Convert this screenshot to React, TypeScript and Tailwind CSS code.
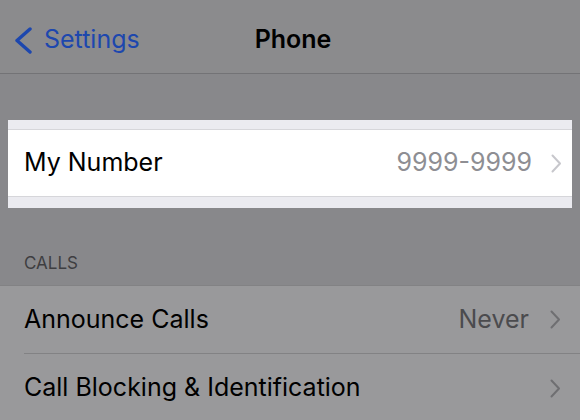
import { FC } from "react";

const Chevron: FC<{ color: string }> = ({ color }) => (
  <svg width="11" height="19" viewBox="0 0 11 19" fill="none">
    <path d="M1.5 1.5L9 9.5L1.5 17.5" stroke={color} strokeWidth="2" strokeLinecap="round" strokeLinejoin="round" />
  </svg>
);

const Row: FC<{ label: string; value?: string; last?: boolean }> = ({ label, value, last }) => (
  <div className="flex h-[68px] items-center pl-6">
    <div className={`flex h-full flex-1 items-center pr-[19px] ${last ? "" : "border-b border-[#828284]"}`}>
      <span className="flex-1 text-[25px] text-black">{label}</span>
      {value && <span className="mr-[21px] text-[25px] text-[#4b4b4e]">{value}</span>}
      <Chevron color="#6f6f72" />
    </div>
  </div>
);

export default function App() {
  return (
    <div
      className="h-[420px] w-[580px] overflow-hidden bg-[#88888b]"
      style={{ fontFamily: "Inter, 'Liberation Sans', sans-serif" }}
    >
      <div className="grid h-[74px] grid-cols-[1fr_auto_1fr] items-center border-b border-[#737376] bg-[#8b8b8d] pt-[7px]">
        <div className="flex items-center gap-[11px] pl-[13px] text-[#1d47ae]">
          <svg width="20" height="27" viewBox="0 0 20 27" fill="none">
            <path d="M17 2L4 13.5L17 25" stroke="#1d47ae" strokeWidth="3.4" strokeLinecap="round" strokeLinejoin="round" />
          </svg>
          <span className="text-[25px]">Settings</span>
        </div>
        <span className="ml-[6px] text-[25px] font-semibold text-black">Phone</span>
        <div />
      </div>

      <div className="mx-2 mt-[46px] bg-[#ebebf0] pt-[9px] pb-[11px]">
        <div className="flex h-[68px] items-center border-y border-[#d6d6da] bg-white pr-[10px] pl-4">
          <span className="flex-1 text-[25px] text-black">My Number</span>
          <span className="mr-[19px] text-[25px] text-[#8e8e93]">9999-9999</span>
          <Chevron color="#c7c7cc" />
        </div>
      </div>

      <div className="px-6 pt-[43px] pb-[10px] text-[17px] leading-[24px] text-[#3e3e41]">CALLS</div>

      <div className="border-t border-[#828284] bg-[#99999b]">
        <Row label="Announce Calls" value="Never" />
        <Row label="Call Blocking & Identification" last />
      </div>
    </div>
  );
}
